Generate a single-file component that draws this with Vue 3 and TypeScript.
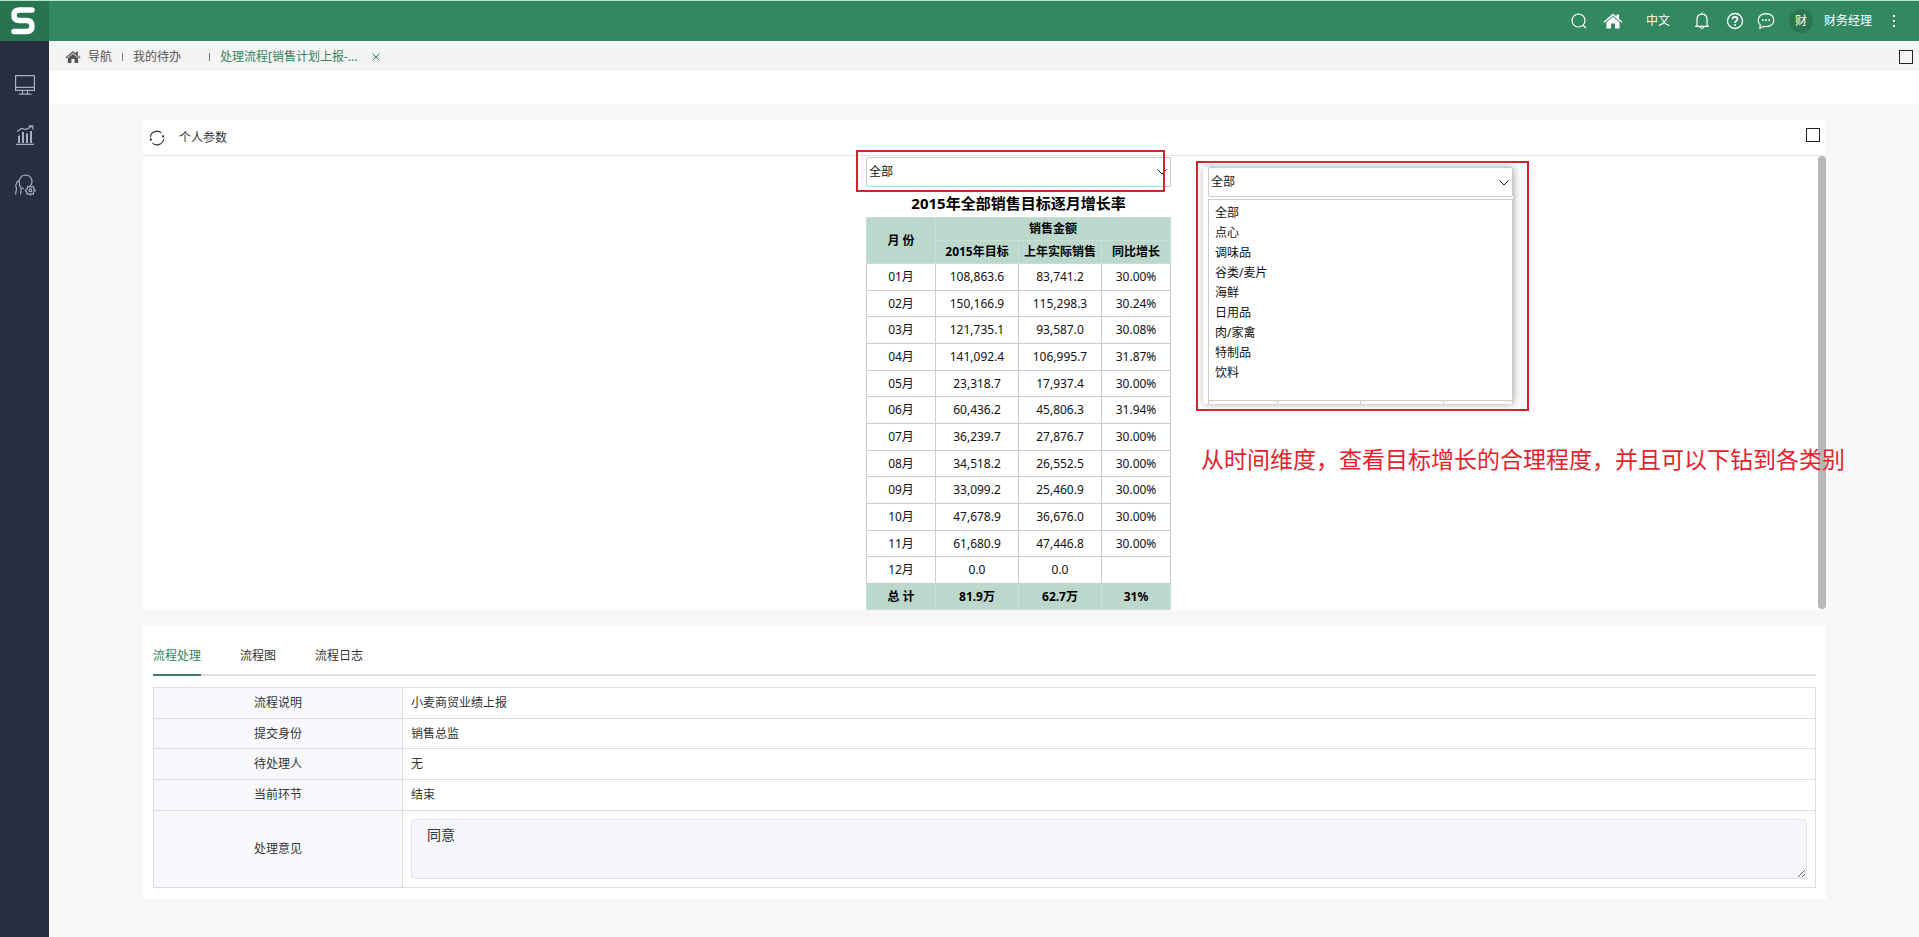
<script setup lang="ts">
import { ref } from 'vue'

interface MonthRow {
  month: string
  target: string
  actual: string
  growth: string
}

const categories: string[] = ['全部', '点心', '调味品', '谷类/麦片', '海鲜', '日用品', '肉/家禽', '特制品', '饮料']
const category = ref('全部')
const openCategory = ref('全部')
const opinion = ref('同意')
const activeTab = ref('流程处理')
const tabs: string[] = ['流程处理', '流程图', '流程日志']

const rows: MonthRow[] = [
  { month: '01月', target: '108,863.6', actual: '83,741.2', growth: '30.00%' },
  { month: '02月', target: '150,166.9', actual: '115,298.3', growth: '30.24%' },
  { month: '03月', target: '121,735.1', actual: '93,587.0', growth: '30.08%' },
  { month: '04月', target: '141,092.4', actual: '106,995.7', growth: '31.87%' },
  { month: '05月', target: '23,318.7', actual: '17,937.4', growth: '30.00%' },
  { month: '06月', target: '60,436.2', actual: '45,806.3', growth: '31.94%' },
  { month: '07月', target: '36,239.7', actual: '27,876.7', growth: '30.00%' },
  { month: '08月', target: '34,518.2', actual: '26,552.5', growth: '30.00%' },
  { month: '09月', target: '33,099.2', actual: '25,460.9', growth: '30.00%' },
  { month: '10月', target: '47,678.9', actual: '36,676.0', growth: '30.00%' },
  { month: '11月', target: '61,680.9', actual: '47,446.8', growth: '30.00%' },
  { month: '12月', target: '0.0', actual: '0.0', growth: '' },
]

const details = [
  { label: '流程说明', value: '小麦商贸业绩上报' },
  { label: '提交身份', value: '销售总监' },
  { label: '待处理人', value: '无' },
  { label: '当前环节', value: '结束' },
]
</script>

<template>
  <div class="app">
    <header class="topbar">
      <a class="logo" href="#" aria-label="首页">
        <svg width="26" height="30" viewBox="0 0 26 30">
          <path d="M22 4H9.500Q4 4 4 9.200T9.500 14.500H16.500Q22 14.500 22 20T16.500 25.500H4" fill="none" stroke="#fff" stroke-width="5.500" stroke-linecap="round" stroke-linejoin="round" />
        </svg>
      </a>
      <nav class="tools">
        <button class="tool" aria-label="搜索">
          <svg width="16" height="16" viewBox="0 0 16 16" fill="none" stroke="#fff" stroke-width="1.200">
            <circle cx="7.500" cy="7.500" r="6.500" /><path d="M12 12.200L15 15" />
          </svg>
        </button>
        <button class="tool home" aria-label="主页">
          <svg width="20" height="16" viewBox="0 0 20 16" fill="#fff">
            <path d="M10 .5L13.500 3.500V1.500H16V5.700L19.500 8.700L18.600 9.800L10 2.800L1.400 9.800L.5 8.700Z" />
            <path d="M10 3.800L16.500 9.200V15.500H12V10.500H8V15.500H3.500V9.200Z" />
          </svg>
        </button>
        <button class="tool lang">中文</button>
        <button class="tool bell" aria-label="通知">
          <svg width="16" height="18" viewBox="0 0 16 18" fill="none" stroke="#fff" stroke-width="1.200">
            <path d="M8 .5V2M1 14.400H15M3 14.400V7.500Q3 2.200 8 2.200T13 7.500V14.400M6 15Q8 18 10 15" />
          </svg>
        </button>
        <button class="tool help" aria-label="帮助">
          <svg width="18" height="18" viewBox="0 0 18 18" fill="none" stroke="#fff">
            <circle cx="9" cy="9" r="7.500" stroke-width="1.300" />
            <path d="M6.500 7.300Q6.500 4.900 9 4.900T11.500 7.100Q11.500 8.200 10.200 9T9 11" stroke-width="1.700" />
            <circle cx="9" cy="13" r="1" fill="#fff" stroke="none" />
          </svg>
        </button>
        <button class="tool chat" aria-label="消息">
          <svg width="18" height="18" viewBox="0 0 18 18" fill="none" stroke="#fff" stroke-width="1.200">
            <path d="M3 16.300L3.200 12.700Q1.200 11 1.200 8.200Q1.700 2 9 1.700Q16.500 2 16.800 8.200Q16.500 14.300 9 14.600Q7.600 14.600 6.300 14.300Z" />
            <path d="M5 8.200H6.600M8.200 8.200H9.800M11.400 8.200H13" stroke-width="1.800" />
          </svg>
        </button>
        <span class="avatar">财</span>
        <button class="tool user">财务经理</button>
        <button class="tool more" aria-label="更多">
          <svg width="4" height="14" viewBox="0 0 4 14" fill="#fff">
            <rect x="1" y="1" width="2" height="2" /><rect x="1" y="6" width="2" height="2" /><rect x="1" y="11" width="2" height="2" />
          </svg>
        </button>
      </nav>
    </header>

    <div class="body">
      <aside class="sidebar">
        <button class="side" aria-label="工作台">
          <svg width="20" height="20" viewBox="0 0 20 20" fill="none" stroke="#a3b0c4" stroke-width="1.200">
            <path d="M.6 .6H19.400V15.400H.6ZM.6 12.400H19.400M7.500 15.400V19M12.500 15.400V19M3.500 19.200H16.500" />
          </svg>
        </button>
        <button class="side" aria-label="报表">
          <svg width="20" height="20" viewBox="0 0 20 20" fill="none" stroke="#a3b0c4" stroke-width="1.200">
            <path d="M1 19.400H19M2 6.500L6.500 3.500L11 4.500L17.500 1M13.500 .8H17.800V4.500" />
            <path d="M4 18V10.500M8 18V7M12 18V8.500M16 18V6" stroke-width="2" />
          </svg>
        </button>
        <button class="side" aria-label="用户设置">
          <svg width="22" height="22" viewBox="0 0 22 22" fill="none" stroke="#a3b0c4" stroke-width="1.200">
            <path d="M6.800 13.500Q4.800 11 5.200 7Q6.500 1 11.500 1Q17.500 1.300 18 7.500Q18 9.500 17 11M1.500 20.500L2.500 14.500Q.5 9.500 4.500 6.500M6.500 20.500L7.200 14.500L5.500 11.500M7.200 14L10 14.500" />
            <path d="M14 12.200L15.500 13L16.500 11.500L17.500 13L19.500 12.500L19.700 14.700L21.300 16.300L19.700 17.700L19.300 20L17.500 19.600L16.200 21L14.900 19.600L12.800 20L12.800 17.800L11.300 16.400L12.900 14.800Z" />
            <circle cx="16.400" cy="16.300" r="1.400" />
          </svg>
        </button>
      </aside>

      <main class="main">
        <nav class="crumbs">
          <a class="crumb" href="#">
            <svg width="16" height="14" viewBox="0 0 20 16" fill="#555">
              <path d="M10 .5L13.500 3.500V1.500H16V5.700L19.500 8.700L18.600 9.800L10 2.800L1.400 9.800L.5 8.700Z" />
              <path d="M10 3.800L16.500 9.200V15.500H12V10.500H8V15.500H3.500V9.200Z" />
            </svg>
            导航
          </a>
          <span class="bar"></span>
          <a class="crumb todo" href="#">我的待办</a>
          <span class="bar"></span>
          <a class="crumb current" href="#">处理流程[销售计划上报-...</a>
          <button class="close" aria-label="关闭">
            <svg width="8" height="8" viewBox="0 0 8 8" stroke="#31835d" fill="none"><path d="M.5 .5L7.500 7.500M7.500 .5L.5 7.500" /></svg>
          </button>
          <button class="square" aria-label="最大化"></button>
        </nav>
        <div class="strip"></div>

        <div class="content">
          <section class="panel">
            <div class="panel-head">
              <button class="refresh" aria-label="刷新">
                <svg width="16" height="16" viewBox="0 0 16 16" fill="none" stroke="#333" stroke-width="1.100">
                  <path d="M1.300 7A6.800 6.800 0 0 1 12.500 2.900M14 5A6.800 6.800 0 0 1 14.700 7.500M14.700 9A6.800 6.800 0 0 1 3.500 13.100M2 11A6.800 6.800 0 0 1 1.300 8.500M14.700 7.500L13.200 6.300M1.300 8.500L2.800 9.700" />
                </svg>
              </button>
              <span class="panel-title">个人参数</span>
              <button class="square" aria-label="展开面板"></button>
            </div>

            <div class="report-area">
              <div class="report">
                <div class="picker">
                  <select v-model="category" aria-label="类别">
                    <option v-for="c in categories" :key="c">{{ c }}</option>
                  </select>
                  <svg class="chevron" width="10" height="6" viewBox="0 0 10 6" fill="none" stroke="#222"><path d="M.5 .5L5 5L9.500 .5" /></svg>
                  <div class="mark"></div>
                </div>
                <h1 class="report-title">2015年全部销售目标逐月增长率</h1>
                <table class="sales">
                  <colgroup><col class="c-month" /><col class="c-num" /><col class="c-num" /><col class="c-rate" /></colgroup>
                  <thead>
                    <tr><th rowspan="2">月 份</th><th colspan="3">销售金额</th></tr>
                    <tr><th>2015年目标</th><th>上年实际销售</th><th>同比增长</th></tr>
                  </thead>
                  <tbody>
                    <tr v-for="r in rows" :key="r.month">
                      <td>{{ r.month }}</td><td>{{ r.target }}</td><td>{{ r.actual }}</td><td>{{ r.growth }}</td>
                    </tr>
                  </tbody>
                  <tfoot>
                    <tr><th>总 计</th><th>81.9万</th><th>62.7万</th><th>31%</th></tr>
                  </tfoot>
                </table>

                <div class="callout">
                  <div class="sheet">
                    <div class="picker">
                      <select v-model="openCategory" aria-label="展开的类别">
                        <option v-for="c in categories" :key="c">{{ c }}</option>
                      </select>
                      <svg class="chevron" width="10" height="6" viewBox="0 0 10 6" fill="none" stroke="#222"><path d="M.5 .5L5 5L9.500 .5" /></svg>
                    </div>
                    <ul class="options" role="listbox" aria-label="类别选项">
                      <li v-for="c in categories" :key="c" role="option" :aria-selected="c === openCategory" @click="openCategory = c">{{ c }}</li>
                    </ul>
                    <div class="peek"><span class="c-month"></span><span class="c-num"></span><span class="c-num"></span><span class="c-rate"></span></div>
                  </div>
                </div>
                <p class="note">从时间维度，查看目标增长的合理程度，并且可以下钻到各类别</p>
              </div>
              <div class="thumb"></div>
            </div>
          </section>

          <section class="panel flow">
            <div class="tabs" role="tablist">
              <button v-for="t in tabs" :key="t" class="tab" role="tab" :class="{ active: t === activeTab }" :aria-selected="t === activeTab" @click="activeTab = t">{{ t }}</button>
            </div>
            <table class="details">
              <tbody>
                <tr v-for="d in details" :key="d.label"><th scope="row">{{ d.label }}</th><td>{{ d.value }}</td></tr>
                <tr><th scope="row"><label for="opinion">处理意见</label></th><td class="area"><textarea id="opinion" v-model="opinion"></textarea></td></tr>
              </tbody>
            </table>
          </section>
        </div>
      </main>
    </div>
  </div>
</template>

<style>
body { margin: 0; background: #f7f7f7; }
</style>

<style scoped>
* { box-sizing: border-box; }
.app {
  min-height: 100vh;
  display: flex;
  flex-direction: column;
  font: 12px/16px "Noto Sans", "Noto Sans CJK SC", sans-serif;
  color: #333;
}
button { border: 0; padding: 0; margin: 0; background: none; font: inherit; color: inherit; cursor: pointer; }
svg { display: block; flex: none; }
a { color: inherit; text-decoration: none; }

.topbar { height: 41px; display: flex; background: #328961; border-top: 1px solid #b5e5cc; color: #fff; }
.logo { width: 49px; display: flex; align-items: center; justify-content: center; padding-right: 3px; background: #287350; }
.tools { margin-left: auto; display: flex; align-items: center; padding-right: 23px; }
.tool { display: flex; align-items: center; }
.home { margin-left: 16px; }
.lang { margin-left: 23px; }
.bell { margin-left: 24px; }
.help { margin-left: 16px; }
.chat { margin-left: 13px; }
.avatar { width: 24px; height: 24px; margin-left: 14px; border-radius: 50%; background: #2c7551; display: flex; align-items: center; justify-content: center; }
.user { margin-left: 11px; }
.more { margin-left: 20px; }

.body { flex: 1; display: flex; }
.sidebar { width: 49px; flex: none; background: #282d40; display: flex; flex-direction: column; align-items: center; gap: 28px; padding-top: 33px; }
.side { width: 22px; height: 22px; display: flex; align-items: center; justify-content: center; }
.main { flex: 1; min-width: 0; background: #f7f7f7; }
.crumbs { height: 30px; display: flex; align-items: center; padding: 1px 6px 0 16px; background: #f4f4f4; color: #555; }
.crumb { display: flex; align-items: center; gap: 7px; }
.bar { width: 1px; height: 8px; margin: 0 10px; background: #777; }
.todo { margin-right: 18px; }
.current { color: #31835d; }
.close { margin-left: 14px; }
.square { width: 14px; height: 14px; border: 1px solid #222; margin-left: auto; }
.strip { height: 33px; background: #fff; }

.content { padding: 16px 93px 0 94px; display: flex; flex-direction: column; gap: 16px; }
.panel { background: #fff; }
.panel-head { height: 35px; display: flex; align-items: center; padding: 0 6px; }
.panel-title { margin-left: 14px; }
.panel-head .square { margin-bottom: 5px; }
.report-area { position: relative; border-top: 1px solid #e6e6e6; display: flex; justify-content: center; padding-left: 68px; }
.thumb { position: absolute; right: 0; top: 0; bottom: 1px; width: 8px; border-radius: 4px; background: #b8b8b8; }
.report { position: relative; width: 305px; color: #111; }
.picker { position: relative; padding-top: 1px; }
.picker select { display: block; width: 100%; height: 30px; appearance: none; border: 1px solid #ccc; border-radius: 2px; background: #fff; color: #111; font: inherit; padding: 0 2px; }
.chevron { position: absolute; right: 4px; top: 13px; pointer-events: none; }
.mark { position: absolute; left: -10px; right: 6px; top: -6px; height: 42px; border: 2px solid #d1242c; pointer-events: none; }
.report-title { margin: 0; height: 30px; padding-top: 6px; font-size: 15px; line-height: 20px; text-align: center; color: #000; white-space: nowrap; }
.sales { width: 305px; border-collapse: collapse; table-layout: fixed; text-align: center; }
.sales th, .sales td { padding: 0; border: 1px solid #ccc; white-space: nowrap; }
.sales th { background: #bcd8cd; border-color: #c9dfd6; font-weight: 700; color: #000; }
.sales tr { height: 27px; }
.sales tbody tr:nth-child(3n+2), .sales tfoot tr { height: 26px; }
.sales thead tr { height: 23px; }
.c-month { width: 69px; }
.c-num { width: 83px; }
.c-rate { width: 69px; }

.callout { position: absolute; left: 330px; top: 5px; width: 333px; border: 2px solid #d1242c; padding: 4px 14px 5px 5px; }
.sheet { position: relative; background: #fff; padding-left: 5px; box-shadow: 1px 0 8px #aaa; }
.sheet .picker { padding-top: 0; }
.options { margin: 2px 0 0; padding: 3px 0 17px 6px; list-style: none; border: 1px solid #ccc; background: #fff; line-height: 20px; }
.peek { height: 3px; display: flex; border-left: 1px solid #ccc; }
.peek span { border-right: 1px solid #ccc; }
.note { position: absolute; left: 335px; top: 287px; margin: 0; font-size: 23px; line-height: 32px; color: #e0242c; white-space: nowrap; z-index: 1; }

.flow { padding: 16px 10px 11px; }
.tabs { display: flex; gap: 39px; border-bottom: 2px solid #dedfe2; margin-bottom: 11px; }
.tab { height: 34px; margin-bottom: -2px; padding-bottom: 4px; border-bottom: 2px solid transparent; }
.tab.active { color: #31835d; border-bottom-color: #3c7e66; }
.details { width: 100%; border-collapse: collapse; table-layout: fixed; }
.details th, .details td { border: 1px solid #dcdce6; padding: 0 8px; height: 31px; font-weight: 400; text-align: left; }
.details tr:nth-child(2) > * { height: 30px; }
.details th { width: 249px; text-align: center; background: #f9f9fd; }
.details .area { padding: 8px; }
.details textarea { display: block; width: 100%; height: 60px; padding: 5px 15px; border: 1px solid #e0e2ea; border-radius: 4px; background: #f4f6fa; font: 14px/20px "Noto Sans", "Noto Sans CJK SC", sans-serif; color: #333; resize: both; }
</style>
